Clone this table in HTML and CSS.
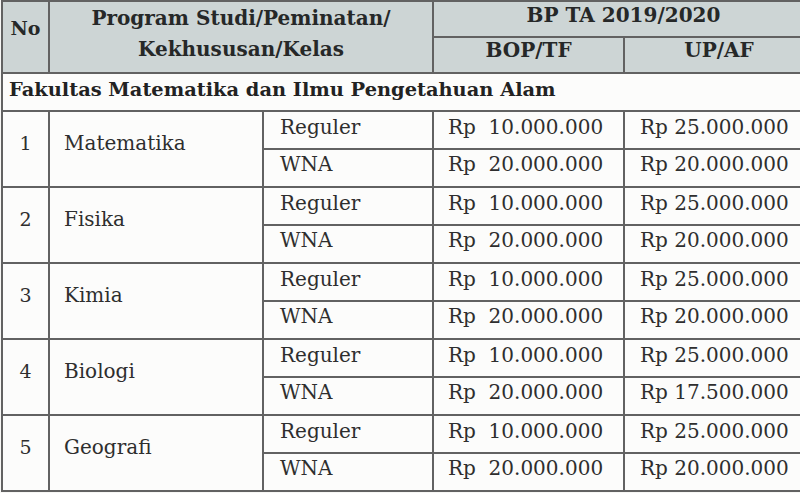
FILE: index.html
```html
<!DOCTYPE html>
<html lang="id">
<head>
<meta charset="utf-8">
<title>Biaya Pendidikan FMIPA</title>
<link rel="stylesheet" href="styles.css">
</head>
<body>
<table class="fees">
  <colgroup>
    <col class="c-no">
    <col class="c-prog">
    <col class="c-kelas">
    <col class="c-bop">
    <col class="c-up">
  </colgroup>
  <thead>
    <tr class="h1">
      <th rowspan="2" class="h-no">No</th>
      <th rowspan="2" colspan="2" class="h-prog">Program Studi/Peminatan/<br>Kekhususan/Kelas</th>
      <th colspan="2" class="h-bp">BP TA 2019/2020</th>
    </tr>
    <tr class="h2">
      <th class="h-sub">BOP/TF</th>
      <th class="h-sub">UP/AF</th>
    </tr>
  </thead>
  <tbody>
    <tr class="fac"><td colspan="5">Fakultas Matematika dan Ilmu Pengetahuan Alam</td></tr>

    <tr class="reg"><td rowspan="2" class="no">1</td><td rowspan="2" class="prog">Matematika</td><td class="kelas">Reguler</td><td class="bop">Rp  10.000.000</td><td class="up">Rp 25.000.000</td></tr>
    <tr class="wna"><td class="kelas">WNA</td><td class="bop">Rp  20.000.000</td><td class="up">Rp 20.000.000</td></tr>

    <tr class="reg"><td rowspan="2" class="no">2</td><td rowspan="2" class="prog">Fisika</td><td class="kelas">Reguler</td><td class="bop">Rp  10.000.000</td><td class="up">Rp 25.000.000</td></tr>
    <tr class="wna"><td class="kelas">WNA</td><td class="bop">Rp  20.000.000</td><td class="up">Rp 20.000.000</td></tr>

    <tr class="reg"><td rowspan="2" class="no">3</td><td rowspan="2" class="prog">Kimia</td><td class="kelas">Reguler</td><td class="bop">Rp  10.000.000</td><td class="up">Rp 25.000.000</td></tr>
    <tr class="wna"><td class="kelas">WNA</td><td class="bop">Rp  20.000.000</td><td class="up">Rp 20.000.000</td></tr>

    <tr class="reg"><td rowspan="2" class="no">4</td><td rowspan="2" class="prog">Biologi</td><td class="kelas">Reguler</td><td class="bop">Rp  10.000.000</td><td class="up">Rp 25.000.000</td></tr>
    <tr class="wna"><td class="kelas">WNA</td><td class="bop">Rp  20.000.000</td><td class="up">Rp 17.500.000</td></tr>

    <tr class="reg"><td rowspan="2" class="no">5</td><td rowspan="2" class="prog">Geografi</td><td class="kelas">Reguler</td><td class="bop">Rp  10.000.000</td><td class="up">Rp 25.000.000</td></tr>
    <tr class="wna"><td class="kelas">WNA</td><td class="bop">Rp  20.000.000</td><td class="up">Rp 20.000.000</td></tr>
  </tbody>
</table>
</body>
</html>
```
FILE: styles.css
```css
html, body {
  margin: 0;
  padding: 0;
  background: #f7f7f5;
  overflow: hidden;
}
body {
  width: 800px;
  height: 493px;
}
.fees {
  border-collapse: collapse;
  table-layout: fixed;
  width: 812px;
  margin-left: 1px;
  font-family: "DejaVu Serif", "Liberation Serif", serif;
  color: #2e2e2e;
  background: #fcfcfb;
}
.c-no { width: 47px; }
.c-prog { width: 214px; }
.c-kelas { width: 170px; }
.c-bop { width: 191px; }
.c-up { width: 190px; }

.fees th, .fees td {
  border: 2px solid #626262;
  padding: 0;
  white-space: pre;
  overflow: hidden;
  vertical-align: middle;
}
.fees thead th {
  background: #cdd5d5;
  font-weight: bold;
  font-size: 20px;
  line-height: 23px;
  color: #262828;
}
.h1 { height: 36px; }
.h2 { height: 36px; }
.fees .h-no {
  font-size: 19px;
  padding-bottom: 18px;
}
.fees .h-prog {
  line-height: 31px;
  padding-bottom: 7px;
  white-space: normal;
}
.fees .h-bp { padding-bottom: 8px; }
.fees .h-sub { padding-bottom: 10px; }

.fac { height: 38px; }
.fees .fac td {
  font-weight: bold;
  font-size: 19.4px;
  padding: 0 0 6px 6px;
  color: #222;
}
.reg, .wna { height: 38px; }
.fees tbody td {
  font-size: 20px;
  line-height: 23px;
}
.fees .no {
  text-align: center;
  font-size: 19px;
  padding-bottom: 12px;
}
.fees .prog {
  padding: 0 0 12px 14px;
}
.fees .kelas {
  padding: 0 0 6px 16px;
}
.fees .bop {
  padding: 0 0 6px 14px;
}
.fees .up {
  padding: 0 0 6px 15px;
}
.fees .wna .kelas, .fees .wna .bop, .fees .wna .up {
  padding-bottom: 8px;
}
```
